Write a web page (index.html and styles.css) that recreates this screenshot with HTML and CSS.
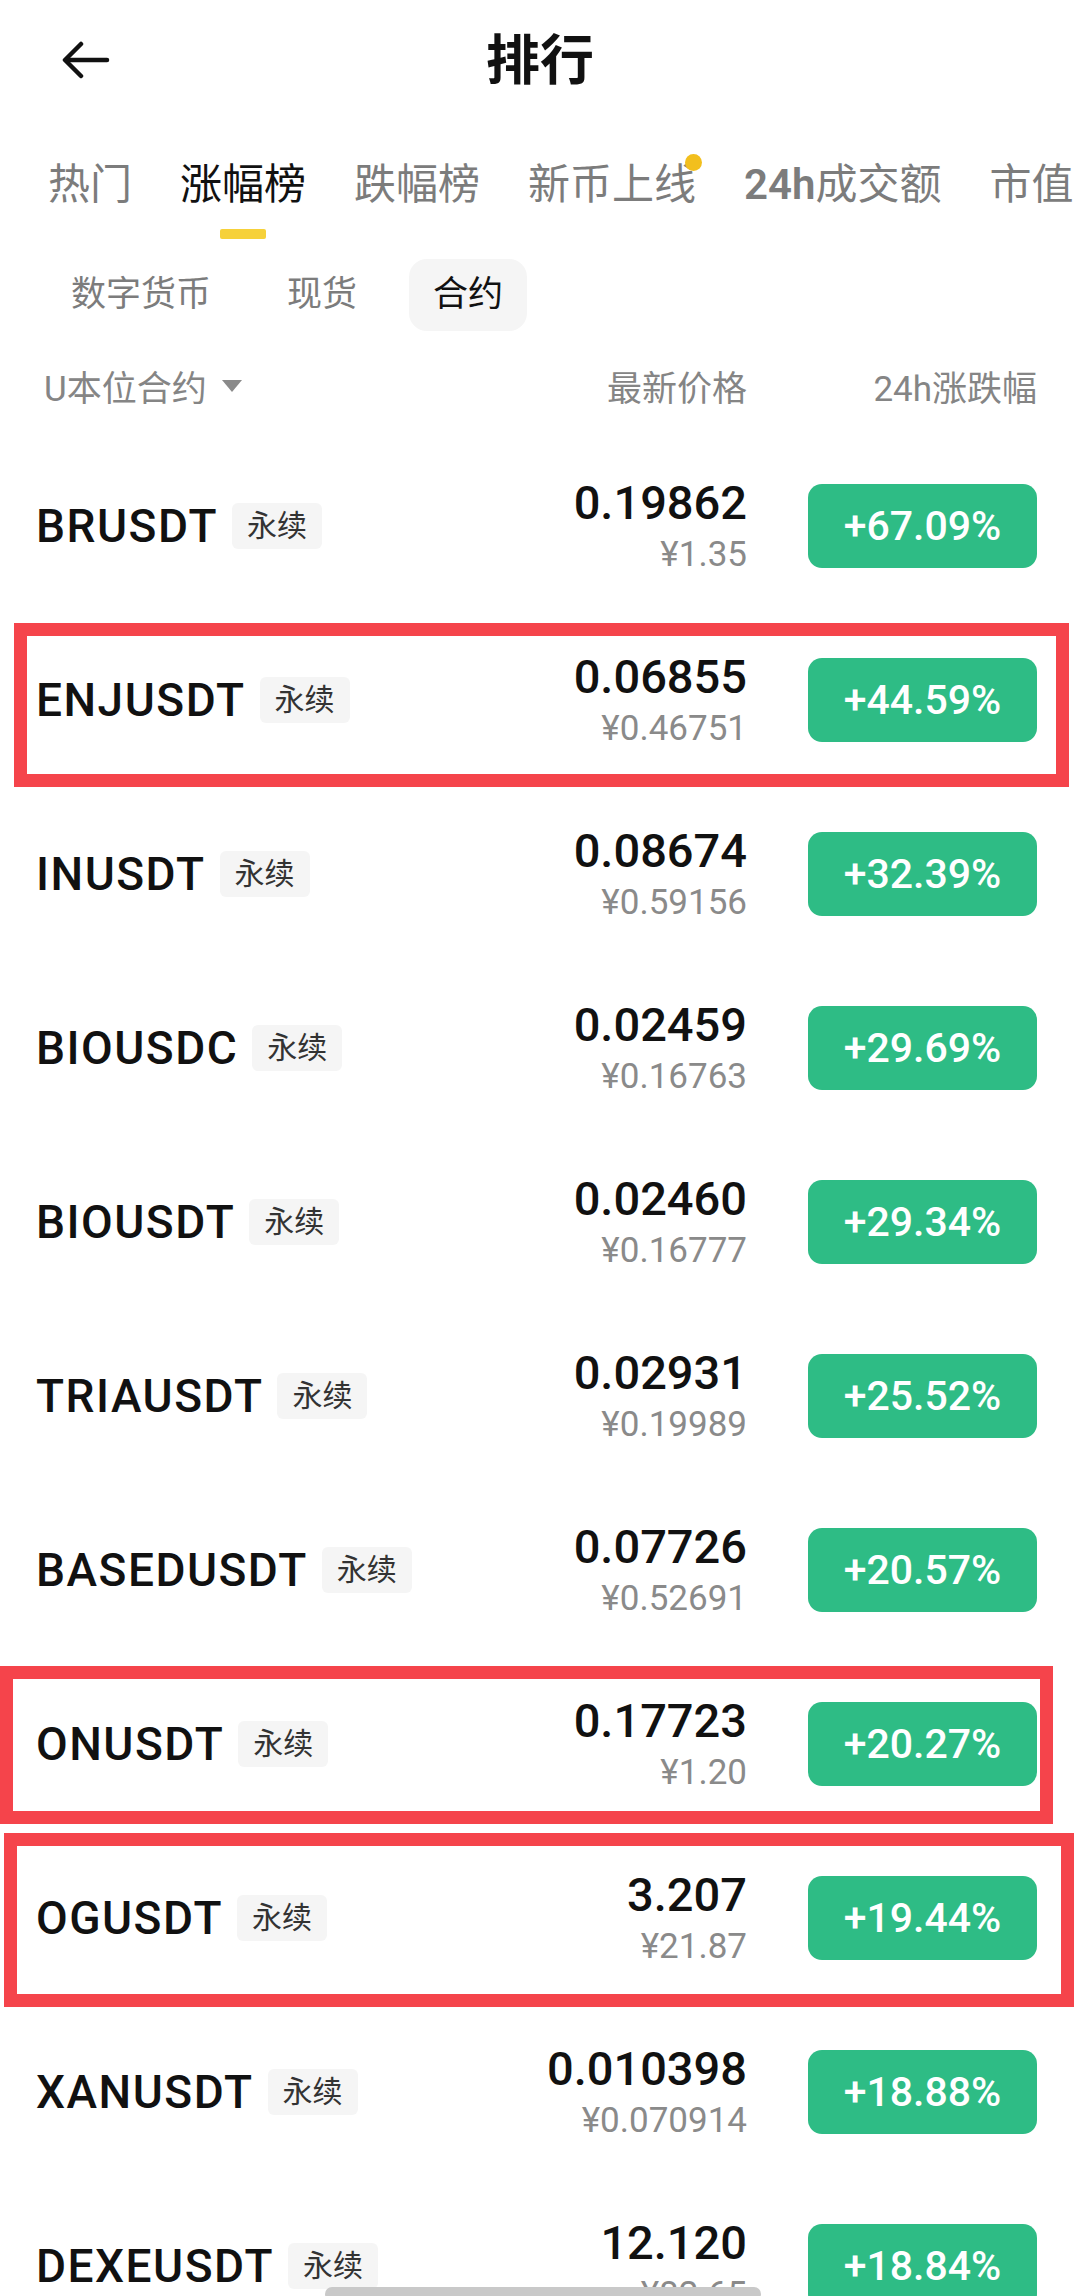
FILE: index.html
```html
<!DOCTYPE html>
<html lang="zh-CN">
<head>
    <meta charset="UTF-8">
    <meta name="viewport" content="width=device-width, initial-scale=1.0">
    <title>排行</title>
    <link rel="stylesheet" href="styles.css">
</head>
<body>
    <div class="screen">
        <header class="topbar">
            <a class="back" href="#">
                <svg width="48" height="38" viewBox="0 0 48 38" fill="none" stroke="currentColor" stroke-width="4.5" stroke-linecap="round" stroke-linejoin="round">
                    <path d="M19 3 L3 19 L19 35"></path>
                    <path d="M4 19 H45"></path>
                </svg>
            </a>
            <h1>排行</h1>
            <span></span>
        </header>

        <nav class="tabs">
            <div class="tab"><span>热门</span></div>
            <div class="tab active"><span>涨幅榜</span></div>
            <div class="tab"><span>跌幅榜</span></div>
            <div class="tab"><span class="has-dot">新币上线</span></div>
            <div class="tab"><span><b class="latin">24h</b>成交额</span></div>
            <div class="tab"><span>市值</span></div>
        </nav>

        <div class="subtabs">
            <div class="subtab">数字货币</div>
            <div class="subtab">现货</div>
            <div class="subtab active">合约</div>
        </div>

        <div class="col-head">
            <div class="col-name">
                U本位合约
                <svg width="22" height="14" viewBox="0 0 22 14"><path d="M1 1 H21 L11 13 Z" fill="currentColor"></path></svg>
            </div>
            <div class="col-price">最新价格</div>
            <div class="col-change">24h涨跌幅</div>
        </div>

        <ul class="list">
            <li class="row">
                <div class="name">BRUSDT<span class="tag">永续</span></div>
                <div class="price"><div class="last">0.19862</div><div class="cny">¥1.35</div></div>
                <div class="change">+67.09%</div>
            </li>
            <li class="row">
                <div class="name">ENJUSDT<span class="tag">永续</span></div>
                <div class="price"><div class="last">0.06855</div><div class="cny">¥0.46751</div></div>
                <div class="change">+44.59%</div>
            </li>
            <li class="row">
                <div class="name">INUSDT<span class="tag">永续</span></div>
                <div class="price"><div class="last">0.08674</div><div class="cny">¥0.59156</div></div>
                <div class="change">+32.39%</div>
            </li>
            <li class="row">
                <div class="name">BIOUSDC<span class="tag">永续</span></div>
                <div class="price"><div class="last">0.02459</div><div class="cny">¥0.16763</div></div>
                <div class="change">+29.69%</div>
            </li>
            <li class="row">
                <div class="name">BIOUSDT<span class="tag">永续</span></div>
                <div class="price"><div class="last">0.02460</div><div class="cny">¥0.16777</div></div>
                <div class="change">+29.34%</div>
            </li>
            <li class="row">
                <div class="name">TRIAUSDT<span class="tag">永续</span></div>
                <div class="price"><div class="last">0.02931</div><div class="cny">¥0.19989</div></div>
                <div class="change">+25.52%</div>
            </li>
            <li class="row">
                <div class="name">BASEDUSDT<span class="tag">永续</span></div>
                <div class="price"><div class="last">0.07726</div><div class="cny">¥0.52691</div></div>
                <div class="change">+20.57%</div>
            </li>
            <li class="row">
                <div class="name">ONUSDT<span class="tag">永续</span></div>
                <div class="price"><div class="last">0.17723</div><div class="cny">¥1.20</div></div>
                <div class="change">+20.27%</div>
            </li>
            <li class="row">
                <div class="name">OGUSDT<span class="tag">永续</span></div>
                <div class="price"><div class="last">3.207</div><div class="cny">¥21.87</div></div>
                <div class="change">+19.44%</div>
            </li>
            <li class="row">
                <div class="name">XANUSDT<span class="tag">永续</span></div>
                <div class="price"><div class="last">0.010398</div><div class="cny">¥0.070914</div></div>
                <div class="change">+18.88%</div>
            </li>
            <li class="row">
                <div class="name">DEXEUSDT<span class="tag">永续</span></div>
                <div class="price"><div class="last">12.120</div><div class="cny">¥82.65</div></div>
                <div class="change">+18.84%</div>
            </li>
        </ul>

        <!-- 标注框 -->
        <div class="mark mark-enj"></div>
        <div class="mark mark-on"></div>
        <div class="mark mark-og"></div>

        <div class="home-bar"></div>
    </div>
</body>
</html>
```

FILE: styles.css
```css
:root {
    --text-color: #111111;
    --muted-color: #7c7c7c;
    --green: #2ebc85;
    --yellow: #f6d13a;
    --dot-color: #f2bf1d;
    --chip-bg: #f5f5f5;
    --mark-color: #f5444b;
}

* {
    margin: 0;
    padding: 0;
    box-sizing: border-box;
}

body {
    font-family: Roboto, "Noto Sans CJK SC", sans-serif;
    background-color: #ffffff;
    color: var(--text-color);
}

.screen {
    position: relative;
    width: 1080px;
    height: 2296px;
    overflow: hidden;
    background-color: #ffffff;
}

/* 顶部标题栏 */
.topbar {
    display: grid;
    grid-template-columns: 1fr auto 1fr;
    align-items: center;
    height: 124px;
    padding: 0 62px;
}

.back {
    display: flex;
    color: #111111;
    margin-top: -4px;
}

h1 {
    font-size: 54px;
    font-weight: 700;
    line-height: 1;
}

/* 一级标签 */
.tabs {
    display: flex;
    align-items: flex-start;
    gap: 48px;
    padding: 36px 0 0 48px;
    white-space: nowrap;
    overflow: hidden;
}

.tab {
    display: flex;
    flex-direction: column;
    align-items: center;
    flex-shrink: 0;
    font-size: 42px;
    line-height: 50px;
    color: var(--muted-color);
}

.tab.active {
    color: var(--text-color);
}

.tab.active::after {
    content: '';
    width: 46px;
    height: 10px;
    margin-top: 19px;
    background-color: var(--yellow);
    border-radius: 2px;
}

.tab .latin {
    font-weight: 600;
}

.has-dot {
    position: relative;
}

.has-dot::after {
    content: '';
    position: absolute;
    top: -6px;
    right: -6px;
    width: 17px;
    height: 17px;
    border-radius: 50%;
    background-color: var(--dot-color);
}

/* 二级标签 */
.subtabs {
    display: flex;
    gap: 28px;
    margin-top: 20px;
    padding-left: 47px;
}

.subtab {
    height: 72px;
    padding: 0 24px;
    font-size: 35px;
    line-height: 72px;
    color: var(--muted-color);
    border-radius: 18px;
}

.subtab.active {
    color: var(--text-color);
    background-color: var(--chip-bg);
}

/* 列表头 */
.col-head {
    display: flex;
    align-items: center;
    height: 108px;
    padding: 0 43px 0 44px;
    font-size: 35px;
    color: #858585;
}

.col-name {
    flex: 1;
    display: flex;
    align-items: center;
    gap: 14px;
}

.col-name svg {
    color: #8a8a8a;
    margin-top: 2px;
}

.col-change {
    width: 229px;
    margin-left: 61px;
    text-align: right;
}

/* 列表 */
.list {
    list-style: none;
}

.row {
    display: flex;
    align-items: center;
    height: 174px;
    padding: 0 43px 0 36px;
}

.name {
    flex: 1;
    display: flex;
    align-items: center;
    font-size: 46px;
    font-weight: 500;
    line-height: 52px;
    letter-spacing: 1.5px;
}

.tag {
    margin-left: 14px;
    height: 46px;
    padding: 0 15px;
    font-size: 30px;
    font-weight: 400;
    line-height: 46px;
    letter-spacing: 0;
    color: #333333;
    background-color: var(--chip-bg);
    border-radius: 6px;
}

.price {
    padding-top: 6px;
    text-align: right;
}

.last {
    font-size: 47px;
    font-weight: 500;
    line-height: 52px;
}

.cny {
    font-size: 35px;
    line-height: 52px;
    color: #8a8a8a;
}

.change {
    width: 229px;
    height: 84px;
    margin-left: 61px;
    font-size: 41px;
    font-weight: 500;
    line-height: 84px;
    text-align: center;
    color: #ffffff;
    background-color: var(--green);
    border-radius: 14px;
}

/* 红色标注框 */
.mark {
    position: absolute;
    border: 13px solid var(--mark-color);
}

.mark-enj {
    left: 14px;
    top: 623px;
    width: 1055px;
    height: 164px;
}

.mark-on {
    left: 0;
    top: 1666px;
    width: 1053px;
    height: 158px;
}

.mark-og {
    left: 4px;
    top: 1833px;
    width: 1070px;
    height: 174px;
}

.home-bar {
    position: absolute;
    left: 325px;
    top: 2287px;
    width: 436px;
    height: 14px;
    border-radius: 7px;
    background-color: #c9c9c9;
}
```
